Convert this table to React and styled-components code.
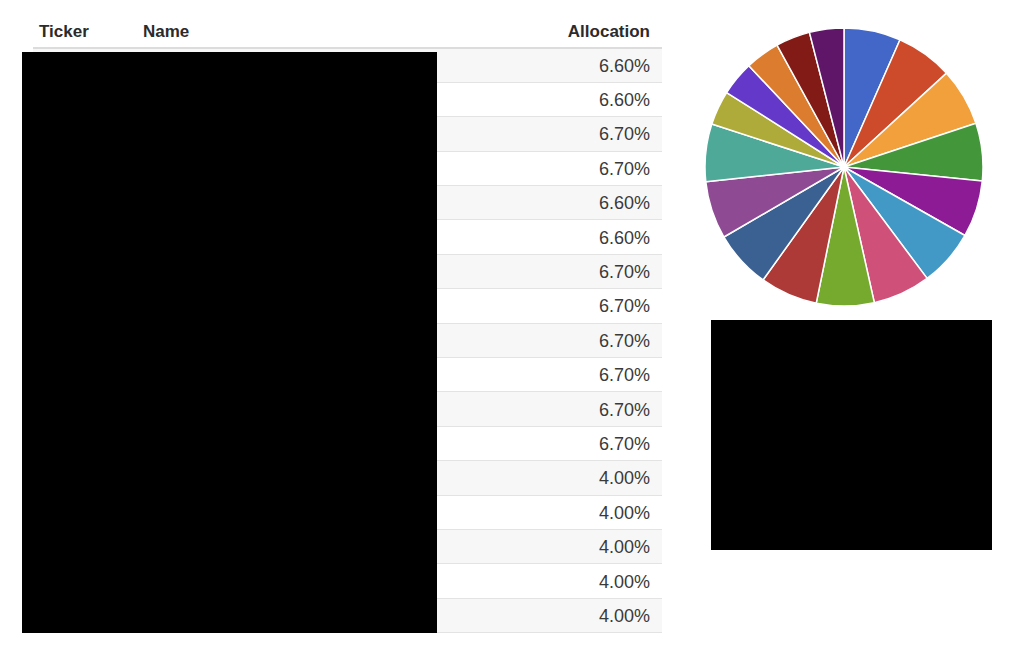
import React from 'react';
import styled, { createGlobalStyle } from 'styled-components';

const GlobalStyle = createGlobalStyle`
  body {
    margin: 0;
    background: #fff;
    font-family: "Liberation Sans", Arial, sans-serif;
    color: #333;
  }
`

const allocations = [
  6.6, 6.6, 6.7, 6.7, 6.6, 6.6, 6.7, 6.7, 6.7,
  6.7, 6.7, 6.7, 4.0, 4.0, 4.0, 4.0, 4.0,
];

const sliceColors = [
  '#4267c9', '#cd4a2a', '#f2a03b', '#43963a', '#8e1b96', '#4399c6',
  '#cf5179', '#76aa2f', '#ad3a37', '#3b6192', '#8e4b94', '#4fa999',
  '#aeab3a', '#6438c9', '#dc7c2e', '#821a15', '#601668',
];

const Page = styled.div`
  display: flex;
  align-items: flex-start;
  padding: 14px 0 0 33px;
  gap: 42px;
`

const TableWrap = styled.div`
  position: relative;
  width: 629px;
`

const Table = styled.table`
  width: 100%;
  border-collapse: collapse;
  font-size: 17px;
`

const Th = styled.th`
  text-align: ${props => props.right ? 'right' : 'left'};
  width: ${props => props.w || 'auto'};
  padding: 9px ${props => props.right ? '12px' : '6px'} 6px 6px;
  line-height: 18px;
  font-weight: bold;
  color: #2b2b2b;
  border-bottom: 2px solid #dcdcdc;
`

const Row = styled.tr`
  background: ${props => props.striped ? '#f7f7f7' : '#fff'};
  &:last-child td {
    border-bottom: 1px solid #e3e3e3;
  }
`

const Td = styled.td`
  height: 34.4px;
  box-sizing: border-box;
  padding: 1px ${props => props.right ? '12px' : '6px'} 0 6px;
  text-align: ${props => props.right ? 'right' : 'left'};
  border-top: 1px solid #e3e3e3;
  font-size: 18px;
  line-height: 18px;
  color: #3a3a3a;
`

// redaction block lying over the ticker/name columns
const Redacted = styled.div`
  position: absolute;
  left: -11px;
  top: 38px;
  width: 415px;
  height: 581px;
  background: #000;
`

const Side = styled.div`
  display: flex;
  flex-direction: column;
  align-items: flex-start;
  padding-top: 13px;
  gap: 13px;
`

const PieSvg = styled.svg`
  display: block;
  width: 280px;
  height: 280px;
`

const Block = styled.div`
  width: 281px;
  height: 230px;
  margin-left: 7px;
  background: #000;
`

const polar = (cx, cy, r, a) => [cx + r * Math.cos(a), cy + r * Math.sin(a)];

const Pie = ({ data }) => {
  const total = data.reduce((s, v) => s + v, 0);
  const cx = 140, cy = 140, r = 139;
  let angle = -Math.PI / 2;
  return (
    <PieSvg viewBox="0 0 280 280">
      {data.map((v, i) => {
        const sweep = (v / total) * Math.PI * 2;
        const [x1, y1] = polar(cx, cy, r, angle);
        const [x2, y2] = polar(cx, cy, r, angle + sweep);
        angle += sweep;
        const d = `M${cx},${cy} L${x1},${y1} A${r},${r} 0 ${sweep > Math.PI ? 1 : 0} 1 ${x2},${y2} Z`;
        return <path key={i} d={d} fill={sliceColors[i]} stroke="#fff" strokeWidth="1.5" strokeLinejoin="round" />;
      })}
    </PieSvg>
  );
};

export default function App() {
  return (
    <Page>
      <GlobalStyle />
      <TableWrap>
        <Table>
          <thead>
            <tr>
              <Th w="92px">Ticker</Th>
              <Th>Name</Th>
              <Th right>Allocation</Th>
            </tr>
          </thead>
          <tbody>
            {allocations.map((a, i) => (
              <Row key={i} striped={i % 2 === 0}>
                <Td />
                <Td />
                <Td right>{a.toFixed(2)}%</Td>
              </Row>
            ))}
          </tbody>
        </Table>
        <Redacted />
      </TableWrap>
      <Side>
        <Pie data={allocations} />
        <Block />
      </Side>
    </Page>
  );
}
